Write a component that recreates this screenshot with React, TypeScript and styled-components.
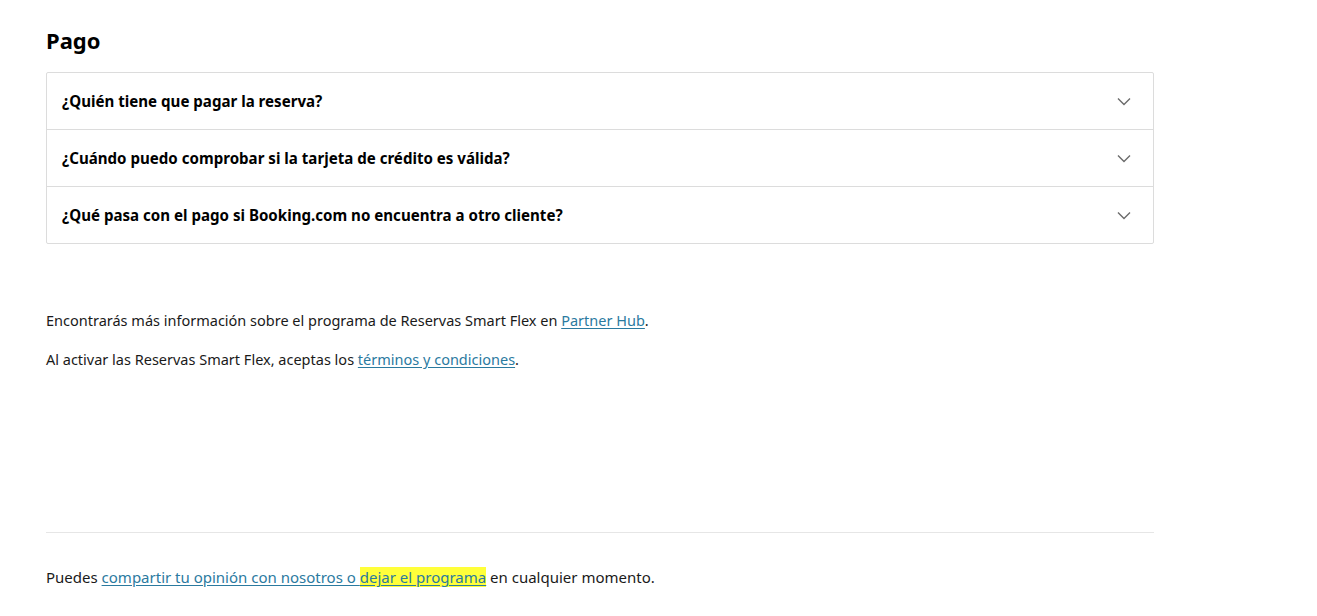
import React from 'react'
import styled, { createGlobalStyle } from 'styled-components'

const GlobalStyle = createGlobalStyle`
  body {
    margin: 0;
    background: #ffffff;
    font-family: 'Noto Sans', 'Open Sans', sans-serif;
    color: #1a1a1a;
  }
`

const Page = styled.div`
  width: 1108px;
  padding: 23px 0 0 46px;
`

const Title = styled.h2`
  margin: 0 0 15px;
  font-size: 22px;
  line-height: 34px;
  font-weight: 700;
  color: #000;
`

const Accordion = styled.div`
  border: 1px solid #dcdcdc;
  border-radius: 2px;
`

const Row = styled.div<{ $last?: boolean }>`
  display: flex;
  align-items: center;
  justify-content: space-between;
  height: 56px;
  padding: 0 22px 0 15px;
  border-bottom: ${p => (p.$last ? 'none' : '1px solid #dcdcdc')};
`

const Question = styled.span`
  font-size: 15.1px;
  font-weight: 700;
  color: #000;
`

const Info = styled.div`
  margin-top: 66px;
  display: flex;
  flex-direction: column;
  gap: 18px;
`

const Text = styled.p<{ $size?: number }>`
  margin: 0;
  font-size: ${p => p.$size ?? 14.5}px;
  line-height: 21px;
  color: #1a1a1a;
`

const Link = styled.a<{ $mark?: boolean }>`
  color: #2b7a9f;
  text-decoration: underline;
  text-underline-offset: 2px;
  background: ${p => (p.$mark ? '#ffff3a' : 'transparent')};
`

const Divider = styled.hr`
  margin: 162px 0 0;
  border: none;
  border-top: 1px solid #e6e6e6;
`

const Footer = styled.div`
  margin-top: 34px;
`

const Chevron = () => (
  <svg width="14" height="9" viewBox="0 0 14 9" fill="none">
    <path d="M1 1.5l6 6 6-6" stroke="#6b6b6b" strokeWidth="1.4" />
  </svg>
)

const questions = [
  '¿Quién tiene que pagar la reserva?',
  '¿Cuándo puedo comprobar si la tarjeta de crédito es válida?',
  '¿Qué pasa con el pago si Booking.com no encuentra a otro cliente?',
]

export default function App() {
  return (
    <Page>
      <GlobalStyle />
      <Title>Pago</Title>
      <Accordion>
        {questions.map((q, i) => (
          <Row key={q} $last={i === questions.length - 1}>
            <Question>{q}</Question>
            <Chevron />
          </Row>
        ))}
      </Accordion>
      <Info>
        <Text>
          Encontrarás más información sobre el programa de Reservas Smart Flex en <Link href="#">Partner Hub</Link>.
        </Text>
        <Text>
          Al activar las Reservas Smart Flex, aceptas los <Link href="#">términos y condiciones</Link>.
        </Text>
      </Info>
      <Divider />
      <Footer>
        <Text $size={15}>
          Puedes <Link href="#">compartir tu opinión con nosotros o </Link>
          <Link href="#" $mark>dejar el programa</Link> en cualquier momento.
        </Text>
      </Footer>
    </Page>
  )
}
